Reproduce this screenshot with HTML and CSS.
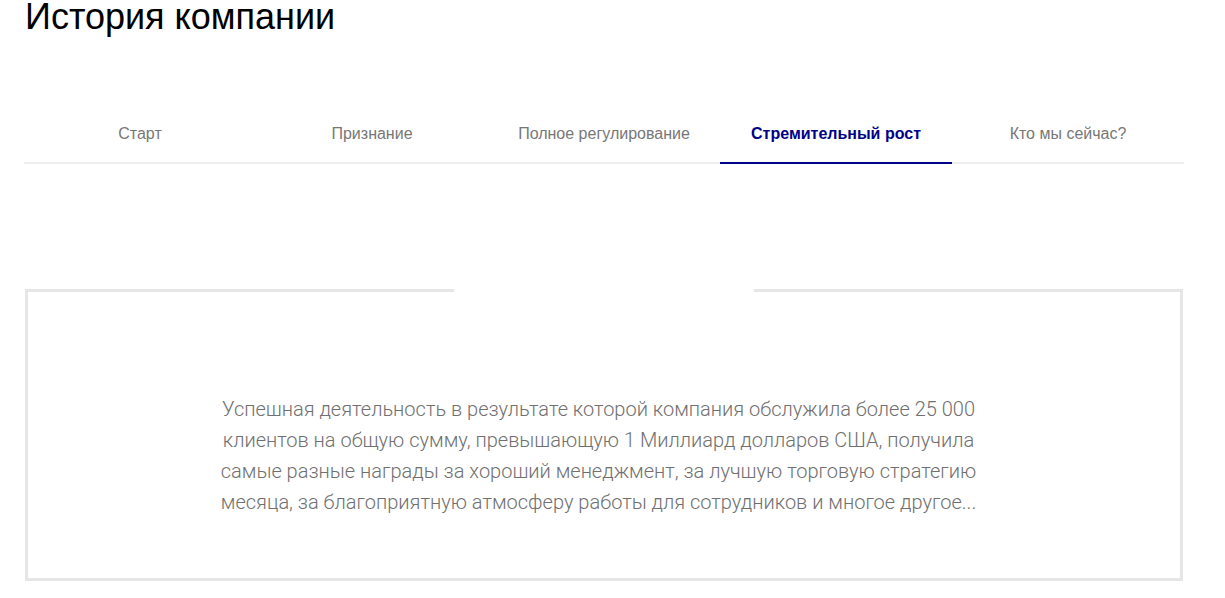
FILE: index.html
```html
<!DOCTYPE html>
<html lang="ru">
<head>
<meta charset="utf-8">
<title>История компании</title>
<link rel="stylesheet" href="styles.css">
</head>
<body>
<div class="page">
  <h1 class="title">История компании</h1>
  <nav class="tabs">
    <a class="tab">Старт</a>
    <a class="tab">Признание</a>
    <a class="tab">Полное регулирование</a>
    <a class="tab tab-active">Стремительный рост</a>
    <a class="tab">Кто мы сейчас?</a>
  </nav>
  <section class="story">
    <p class="story-text">Успешная деятельность в результате которой компания обслужила более 25 000 клиентов на общую сумму, превышающую 1 Миллиард долларов США, получила самые разные награды за хороший менеджмент, за лучшую торговую стратегию месяца, за благоприятную атмосферу работы для сотрудников и многое другое...</p>
  </section>
</div>
</body>
</html>
```

FILE: styles.css
```css
html, body {
  margin: 0;
  padding: 0;
  background: #fff;
}

.page {
  width: 1160px;
  padding-left: 24px;
  font-family: "Liberation Sans", Arial, sans-serif;
}

.title {
  margin: 0;
  padding-left: 1px;
  font-size: 36px;
  font-weight: 400;
  line-height: 34px;
  color: #000;
}

.tabs {
  display: flex;
  margin-top: 70px;
  border-bottom: 2px solid #eeeeee;
}

.tab {
  flex: 1;
  text-align: center;
  font-size: 16px;
  line-height: 20px;
  color: #777;
  padding: 20px 0 18px;
  margin-bottom: -2px;
  border-bottom: 2px solid transparent;
}

.tab-active {
  color: #000088;
  font-weight: 700;
  border-bottom-color: #000088;
}

.story {
  position: relative;
  margin: 125px 1px 0;
  height: 286px;
  border: 3px solid #e6e6e6;
  display: flex;
  justify-content: center;
}

.story::before {
  content: "";
  position: absolute;
  top: -3px;
  left: 50%;
  width: 300px;
  height: 3px;
  margin-left: -150px;
  background: #fff;
}

.story-text {
  margin: 102px 11px 0 0;
  width: 762px;
  text-align: center;
  font-family: Roboto, "Liberation Sans", sans-serif;
  font-weight: 300;
  font-size: 20px;
  line-height: 31px;
  color: #707070;
}
```
